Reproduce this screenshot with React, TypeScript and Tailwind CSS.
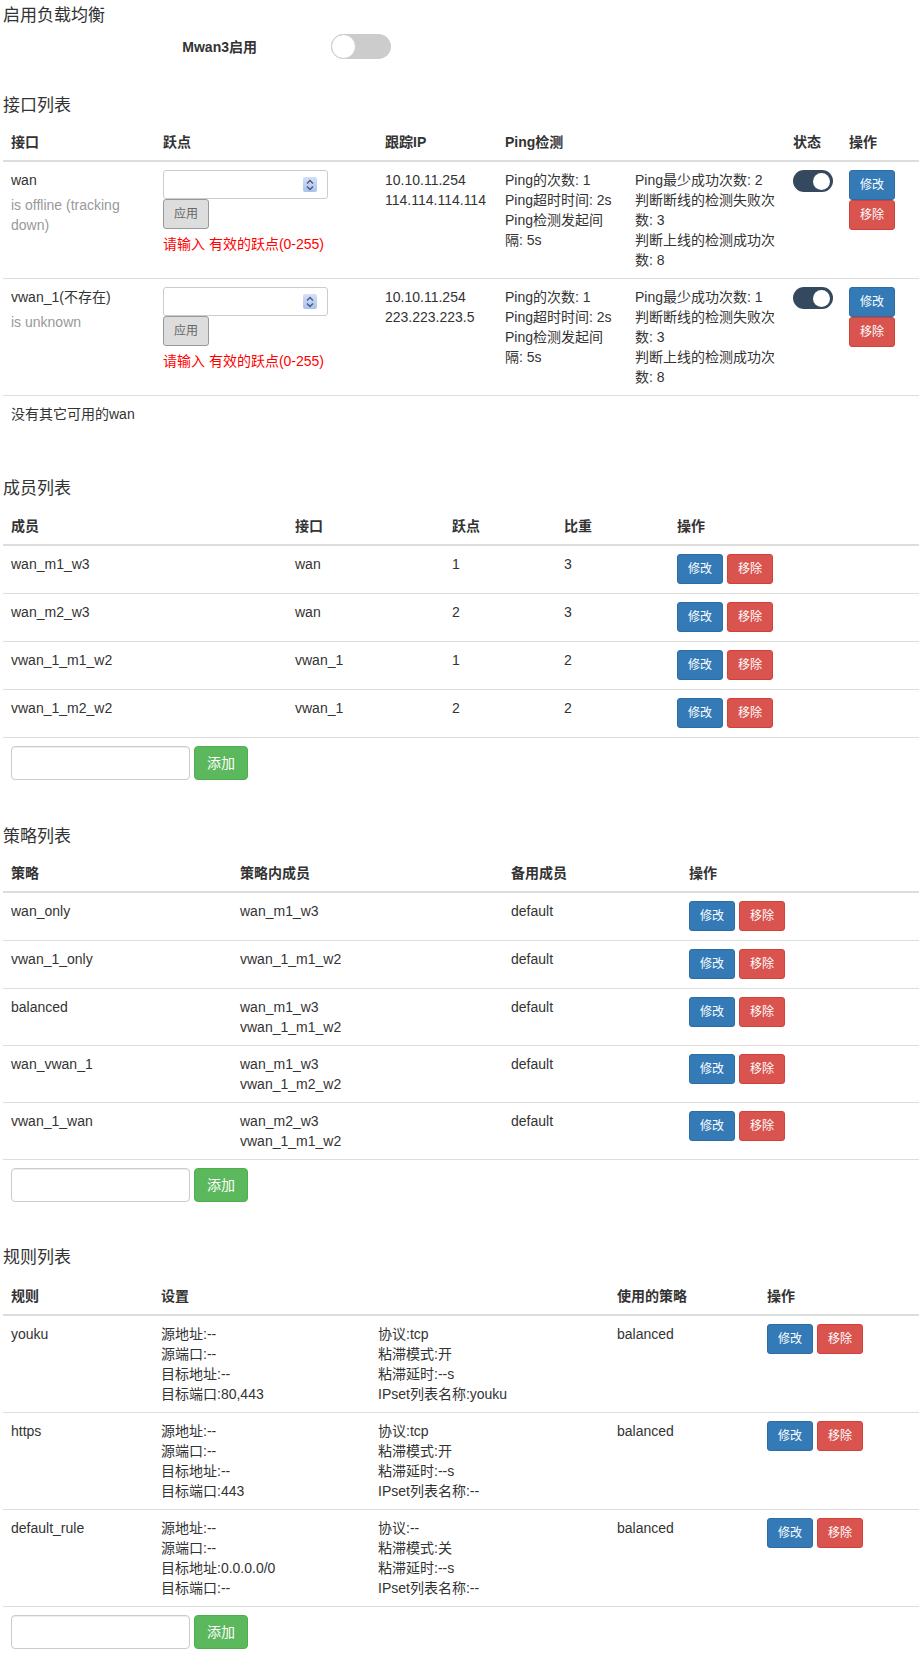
const font = { fontFamily: '"Liberation Sans", "Noto Sans CJK SC", sans-serif' };

const EditBtns = ({ stacked = false }: { stacked?: boolean }) => (
    <div className={stacked ? "flex flex-col" : "flex gap-1"}>
        <button className="w-[46px] h-[30px] rounded-[3px] bg-[#337ab7] border border-[#2e6da4] text-white text-[12px] leading-none">修改</button>
        <button className="w-[46px] h-[30px] rounded-[3px] bg-[#d9534f] border border-[#d43f3a] text-white text-[12px] leading-none">移除</button>
    </div>
);

const AddRow = ({ span }: { span: number }) => (
    <tr>
        <td colSpan={span} className="border-t border-[#ddd] p-2">
            <div className="flex gap-1">
                <input className="w-[179px] h-[34px] rounded border border-[#ccc] shadow-[inset_0_1px_1px_rgba(0,0,0,0.075)] px-3 outline-none" />
                <button className="w-[54px] h-[34px] rounded bg-[#5cb85c] border border-[#4cae4c] text-white text-[14px]">添加</button>
            </div>
        </td>
    </tr>
);

const Th = ({ children, span }: { children?: React.ReactNode; span?: number }) => (
    <th colSpan={span} className="text-left font-bold px-2 py-2 border-b-2 border-[#ddd] align-bottom">{children}</th>
);

const Td = ({ children, className = "" }: { children?: React.ReactNode; className?: string }) => (
    <td className={"border-t border-[#ddd] px-2 pt-2 pb-2 align-top " + className}>{children}</td>
);

const Spinner = () => (
    <div className="absolute right-[10px] top-[6px] w-[14px] h-[15px] rounded-[2px] bg-gradient-to-b from-[#d4e0f8] to-[#a9c1ee] flex flex-col items-center justify-center">
        <svg width="8" height="12" viewBox="0 0 8 12">
            <path d="M1 4.5 L4 1.5 L7 4.5" fill="none" stroke="#4a5a78" strokeWidth="1.4" />
            <path d="M1 7.5 L4 10.5 L7 7.5" fill="none" stroke="#4a5a78" strokeWidth="1.4" />
        </svg>
    </div>
);

const StatusToggle = () => (
    <div className="w-[40px] h-[22px] rounded-full bg-[#34495e] flex items-center justify-end pr-[3px]">
        <div className="w-[17px] h-[17px] rounded-full bg-white" />
    </div>
);

const interfaces = [
    { name: "wan", status: "is offline (tracking down)", ips: ["10.10.11.254", "114.114.114.114"], min: 2 },
    { name: "vwan_1(不存在)", status: "is unknown", ips: ["10.10.11.254", "223.223.223.5"], min: 1 },
];

const members = [
    ["wan_m1_w3", "wan", "1", "3"],
    ["wan_m2_w3", "wan", "2", "3"],
    ["vwan_1_m1_w2", "vwan_1", "1", "2"],
    ["vwan_1_m2_w2", "vwan_1", "2", "2"],
];

const policies = [
    { name: "wan_only", members: ["wan_m1_w3"] },
    { name: "vwan_1_only", members: ["vwan_1_m1_w2"] },
    { name: "balanced", members: ["wan_m1_w3", "vwan_1_m1_w2"] },
    { name: "wan_vwan_1", members: ["wan_m1_w3", "vwan_1_m2_w2"] },
    { name: "vwan_1_wan", members: ["wan_m2_w3", "vwan_1_m1_w2"] },
];

const rules = [
    { name: "youku", a: ["源地址:--", "源端口:--", "目标地址:--", "目标端口:80,443"], b: ["协议:tcp", "粘滞模式:开", "粘滞延时:--s", "IPset列表名称:youku"] },
    { name: "https", a: ["源地址:--", "源端口:--", "目标地址:--", "目标端口:443"], b: ["协议:tcp", "粘滞模式:开", "粘滞延时:--s", "IPset列表名称:--"] },
    { name: "default_rule", a: ["源地址:--", "源端口:--", "目标地址:0.0.0.0/0", "目标端口:--"], b: ["协议:--", "粘滞模式:关", "粘滞延时:--s", "IPset列表名称:--"] },
];

const Lines = ({ items }: { items: string[] }) => (
    <>
        {items.map((t) => (
            <div key={t}>{t}</div>
        ))}
    </>
);

const App = () => {
    return (
        <div className="pl-[3px] pt-1 text-[14px] leading-5 text-[#333] bg-white" style={font}>
            <div className="text-[17px] leading-6">启用负载均衡</div>
            <div className="flex items-center mt-[6px] h-[25px]">
                <div className="w-[254px] text-right font-bold">Mwan3启用</div>
                <div className="ml-[74px] w-[60px] h-[25px] rounded-full bg-[#ccc] flex items-center">
                    <div className="w-[25px] h-[25px] rounded-full bg-white border border-[#ccc]" />
                </div>
            </div>

            {/* 接口列表 */}
            <div className="text-[17px] leading-6 mt-[35px] mb-[6px]">接口列表</div>
            <table className="w-full table-fixed border-collapse">
                <colgroup>
                    <col className="w-[152px]" />
                    <col className="w-[222px]" />
                    <col className="w-[120px]" />
                    <col className="w-[130px]" />
                    <col className="w-[158px]" />
                    <col className="w-[56px]" />
                    <col />
                </colgroup>
                <thead>
                    <tr>
                        <Th>接口</Th>
                        <Th>跃点</Th>
                        <Th>跟踪IP</Th>
                        <Th span={2}>Ping检测</Th>
                        <Th>状态</Th>
                        <Th>操作</Th>
                    </tr>
                </thead>
                <tbody>
                    {interfaces.map((it) => (
                        <tr key={it.name}>
                            <Td>
                                <div>{it.name}</div>
                                <div className="mt-[5px] text-[#999]">{it.status}</div>
                            </Td>
                            <Td>
                                <div className="relative w-[165px] h-[29px] rounded-[3px] border border-[#ccc] bg-white">
                                    <Spinner />
                                </div>
                                <button className="w-[46px] h-[30px] rounded-[3px] bg-[#ddd] border border-[#999] text-[#666] text-[12px] leading-none">应用</button>
                                <div className="text-[#f00] mt-[5px]">请输入 有效的跃点(0-255)</div>
                            </Td>
                            <Td>
                                <Lines items={it.ips} />
                            </Td>
                            <Td>
                                <div>Ping的次数: 1</div>
                                <div>Ping超时时间: 2s</div>
                                <div>Ping检测发起间隔: 5s</div>
                            </Td>
                            <Td>
                                <div>Ping最少成功次数: {it.min}</div>
                                <div>判断断线的检测失败次数: 3</div>
                                <div>判断上线的检测成功次数: 8</div>
                            </Td>
                            <Td>
                                <StatusToggle />
                            </Td>
                            <Td>
                                <EditBtns stacked />
                            </Td>
                        </tr>
                    ))}
                    <tr>
                        <td colSpan={7} className="border-t border-[#ddd] p-2">没有其它可用的wan</td>
                    </tr>
                </tbody>
            </table>

            {/* 成员列表 */}
            <div className="text-[17px] leading-6 mt-[45px] mb-[7px]">成员列表</div>
            <table className="w-full table-fixed border-collapse">
                <colgroup>
                    <col className="w-[284px]" />
                    <col className="w-[157px]" />
                    <col className="w-[112px]" />
                    <col className="w-[113px]" />
                    <col />
                </colgroup>
                <thead>
                    <tr>
                        <Th>成员</Th>
                        <Th>接口</Th>
                        <Th>跃点</Th>
                        <Th>比重</Th>
                        <Th>操作</Th>
                    </tr>
                </thead>
                <tbody>
                    {members.map((m) => (
                        <tr key={m[0]}>
                            <Td>{m[0]}</Td>
                            <Td>{m[1]}</Td>
                            <Td>{m[2]}</Td>
                            <Td>{m[3]}</Td>
                            <Td className="pb-[9px]">
                                <EditBtns />
                            </Td>
                        </tr>
                    ))}
                    <AddRow span={5} />
                </tbody>
            </table>

            {/* 策略列表 */}
            <div className="text-[17px] leading-6 mt-[37px] mb-[6px]">策略列表</div>
            <table className="w-full table-fixed border-collapse">
                <colgroup>
                    <col className="w-[229px]" />
                    <col className="w-[271px]" />
                    <col className="w-[178px]" />
                    <col />
                </colgroup>
                <thead>
                    <tr>
                        <Th>策略</Th>
                        <Th>策略内成员</Th>
                        <Th>备用成员</Th>
                        <Th>操作</Th>
                    </tr>
                </thead>
                <tbody>
                    {policies.map((p) => (
                        <tr key={p.name}>
                            <Td>{p.name}</Td>
                            <Td>
                                <Lines items={p.members} />
                            </Td>
                            <Td>default</Td>
                            <Td className="pb-[9px]">
                                <EditBtns />
                            </Td>
                        </tr>
                    ))}
                    <AddRow span={4} />
                </tbody>
            </table>

            {/* 规则列表 */}
            <div className="text-[17px] leading-6 mt-[36px] mb-2">规则列表</div>
            <table className="w-full table-fixed border-collapse">
                <colgroup>
                    <col className="w-[150px]" />
                    <col className="w-[217px]" />
                    <col className="w-[239px]" />
                    <col className="w-[150px]" />
                    <col />
                </colgroup>
                <thead>
                    <tr>
                        <Th>规则</Th>
                        <Th span={2}>设置</Th>
                        <Th>使用的策略</Th>
                        <Th>操作</Th>
                    </tr>
                </thead>
                <tbody>
                    {rules.map((r) => (
                        <tr key={r.name}>
                            <Td>{r.name}</Td>
                            <Td>
                                <Lines items={r.a} />
                            </Td>
                            <Td>
                                <Lines items={r.b} />
                            </Td>
                            <Td>balanced</Td>
                            <Td>
                                <EditBtns />
                            </Td>
                        </tr>
                    ))}
                    <AddRow span={5} />
                </tbody>
            </table>
        </div>
    );
};

export default App;
